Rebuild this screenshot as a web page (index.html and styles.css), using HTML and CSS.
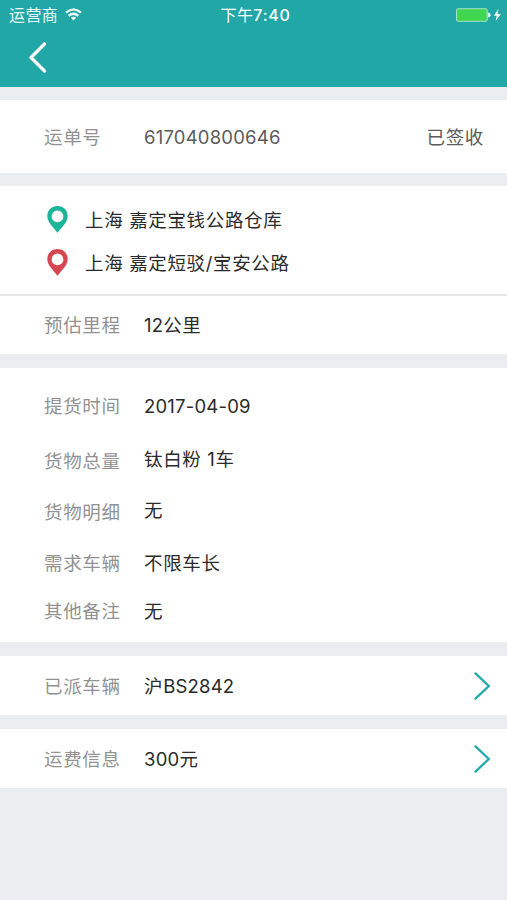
FILE: index.html
```html
<!DOCTYPE html>
<html lang="zh-CN">
<head>
<meta charset="utf-8">
<title>运单详情</title>
<link rel="stylesheet" href="styles.css">
</head>
<body>
<header class="header">
  <div class="status">
    <div class="carrier"><span>运营商</span>
      <svg width="17" height="13" viewBox="0 0 17 13" fill="none" stroke="#fff" stroke-width="2.3"><path d="M1 4.6Q8.5-1.8 16 4.6M3.7 7.8Q8.5 3.7 13.3 7.8"/><path d="M8.5 12.5L5.9 9.8Q8.5 7.8 11.1 9.8Z" fill="#fff" stroke="none"/></svg>
    </div>
    <div class="time">下午<span class="clock">7:40</span></div>
    <div class="power">
      <svg width="46" height="14" viewBox="0 0 46 14"><rect x=".6" y=".7" width="30.6" height="12.6" rx="1.8" fill="#40d650" stroke="#a5e3cf" stroke-width="1.1"/><path d="M32.2 4.4Q34.6 4.8 34.6 7T32.2 9.6Z" fill="#fff"/><path d="M42.4 .9L37.8 7.8H40.8L39.6 13.1L44.9 6H41.6Z" fill="#fff"/></svg>
    </div>
  </div>
  <nav class="nav">
    <svg width="20" height="32" viewBox="0 0 20 32" fill="none" stroke="#fff" stroke-width="3.2" stroke-linecap="round" stroke-linejoin="round"><path d="M16.5 3L3 16.5L16.5 30"/></svg>
  </nav>
</header>
<main>
  <section class="card order">
    <span class="label">运单号</span><span class="value muted num">617040800646</span><span class="state">已签收</span>
  </section>
  <section class="card">
    <div class="route">
      <div class="place">
        <svg class="pin pickup" width="21" height="27" viewBox="0 0 21 27"><path fill-rule="evenodd" d="M10.5 0C4.7 0 .3 4.3.3 10C.3 16.5 7 22 10.5 26.8C14 22 20.7 16.5 20.7 10C20.7 4.3 16.3 0 10.5 0ZM10.5 4.5A5.9 5.9 0 1 1 10.5 16.3A5.9 5.9 0 1 1 10.5 4.5Z"/></svg>
        <span>上海 嘉定宝钱公路仓库</span>
      </div>
      <div class="place">
        <svg class="pin dropoff" width="21" height="27" viewBox="0 0 21 27"><path fill-rule="evenodd" d="M10.5 0C4.7 0 .3 4.3.3 10C.3 16.5 7 22 10.5 26.8C14 22 20.7 16.5 20.7 10C20.7 4.3 16.3 0 10.5 0ZM10.5 4.5A5.9 5.9 0 1 1 10.5 16.3A5.9 5.9 0 1 1 10.5 4.5Z"/></svg>
        <span>上海 嘉定短驳/宝安公路</span>
      </div>
    </div>
    <div class="distance"><span class="label">预估里程</span><span class="value"><span class="num">12</span>公里</span></div>
  </section>
  <section class="card details">
    <div class="labels"><span>提货时间</span><span>货物总量</span><span>货物明细</span><span>需求车辆</span><span>其他备注</span></div>
    <div class="values"><span class="num">2017-04-09</span><span>钛白粉 1车</span><span>无</span><span>不限车长</span><span>无</span></div>
  </section>
  <section class="card link">
    <span class="label">已派车辆</span><span class="value">沪<span class="num">BS2842</span></span>
    <svg class="arrow" width="18" height="30" viewBox="0 0 18 30"><path d="M2.5 2.4L15.8 15L2.5 27.6"/></svg>
  </section>
  <section class="card link">
    <span class="label">运费信息</span><span class="value"><span class="num">300</span>元</span>
    <svg class="arrow" width="18" height="30" viewBox="0 0 18 30"><path d="M2.5 2.4L15.8 15L2.5 27.6"/></svg>
  </section>
</main>
</body>
</html>
```
FILE: styles.css
```css
* { box-sizing: border-box; }
body {
  margin: 0;
  min-height: 900px;
  background: #ecedf1;
  color: #2b2b2b;
  font: 18.5px/28px Inter, "Noto Sans CJK SC", sans-serif;
  letter-spacing: .65px;
  white-space: nowrap;
}
svg { display: block; flex: none; }
.header { height: 87px; background: #22a7a7; color: #fff; }
.status {
  display: grid;
  grid-template-columns: 1fr auto 1fr;
  align-items: center;
  height: 29px;
  padding: 0 5px 0 9px;
  font-size: 16px;
  letter-spacing: .4px;
}
.carrier { display: flex; align-items: center; gap: 7px; opacity: .93; }
.clock { font-weight: 500; letter-spacing: .7px; }
.power { justify-self: end; }
.nav { padding: 12px 0 0 28px; }
main { display: grid; gap: 13.5px; padding-top: 13px; }
.card { background: #fff; }
.num { letter-spacing: .2px; }
.label { width: 100px; color: #929292; }
.muted { color: #5c5c5c; }
.order {
  display: flex;
  align-items: center;
  height: 72.5px;
  padding: 1px 23px 0 44px;
}
.state { margin-left: auto; color: #5c5c5c; }
.route {
  display: grid;
  grid-template-rows: 43px 43px;
  height: 110px;
  padding: 12px 0 0 47px;
  border-bottom: 2px solid #e6e6e8;
}
.place { display: flex; align-items: center; gap: 17px; }
.pickup { fill: #1cb599; }
.dropoff { fill: #d5484f; }
.distance { display: flex; align-items: center; height: 58px; padding-left: 44px; }
.details { display: flex; height: 274.5px; padding: 24px 0 0 44px; }
.labels, .values { display: grid; align-content: start; }
.labels { width: 100px; color: #929292; grid-template-rows: 55px 51px 51px 48.5px 28px; }
.values { grid-template-rows: 53px 51px 53px 48px 28px; }
.link { display: flex; align-items: center; height: 59.5px; padding: 1.5px 16px 0 44px; }
.arrow { margin-left: auto; fill: none; stroke: #22aaaa; stroke-width: 2.3; stroke-linecap: round; }
```
